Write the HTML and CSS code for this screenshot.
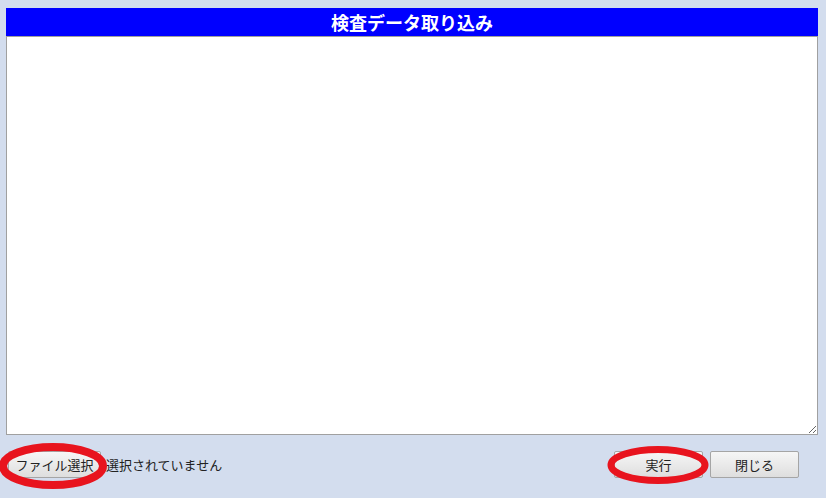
FILE: index.html
```html
<!DOCTYPE html>
<html lang="ja">
  <head>
    <meta charset="UTF-8" />
    <title>検査データ取り込み</title>
    <link rel="stylesheet" href="styles.css">
  </head>
  <body>
    <div class="panel">
      <h1 class="title">検査データ取り込み</h1>
      <textarea class="log"></textarea>
      <div class="footer">
        <div class="file-pick">
          <button type="button" class="btn btn-file">ファイル選択</button>
          <span class="file-name">選択されていません</span>
        </div>
        <div class="actions">
          <button type="button" class="btn">実行</button>
          <button type="button" class="btn">閉じる</button>
        </div>
      </div>
    </div>
    <!-- red highlight marks -->
    <svg class="mark mark-file" width="116" height="54" viewBox="0 0 116 54">
      <ellipse cx="55" cy="26" rx="50" ry="19" />
    </svg>
    <svg class="mark mark-run" width="106" height="46" viewBox="0 0 106 46">
      <ellipse cx="52" cy="22" rx="47" ry="15.5" />
    </svg>
  </body>
</html>
```

FILE: styles.css
```css
body {
  margin: 0;
  padding: 0;
  background-color: #d3ddee;
  font-family: "Noto Sans CJK JP", "Liberation Sans", sans-serif;
  color: #222;
  position: relative;
  height: 498px;
  overflow: hidden;
}
.panel {
  margin: 8px 8px 0 6px;
}
.title {
  margin: 0;
  height: 28px;
  line-height: 28px;
  background-color: #0000ff;
  color: #fff;
  font-size: 18px;
  font-weight: bold;
  text-align: center;
}
.log {
  display: block;
  box-sizing: border-box;
  width: 100%;
  height: 399px;
  margin: 0;
  border: 1px solid #a0a0a0;
  background: #fff;
  resize: both;
}
.footer {
  display: flex;
  justify-content: space-between;
  align-items: center;
  margin-top: 16px;
  padding: 0 19px 0 2px;
}
.file-pick {
  display: flex;
  align-items: center;
  gap: 5px;
}
.file-name {
  font-size: 13px;
}
.actions {
  display: flex;
  gap: 7px;
}
.btn {
  box-sizing: border-box;
  width: 89px;
  height: 27px;
  padding: 0;
  border: 1px solid #a5a5a5;
  border-radius: 2px;
  background: linear-gradient(#f6f6f6, #dedede);
  font-family: "Noto Sans CJK JP", "Liberation Sans", sans-serif;
  font-size: 13px;
  color: #222;
}
.btn-file {
  width: 93px;
}
.mark {
  position: absolute;
}
.mark ellipse {
  fill: none;
  stroke: #e8141e;
}
.mark-file {
  left: -2px;
  top: 440px;
}
.mark-file ellipse {
  stroke-width: 8;
}
.mark-run {
  left: 606px;
  top: 443px;
}
.mark-run ellipse {
  stroke-width: 7;
}
```
